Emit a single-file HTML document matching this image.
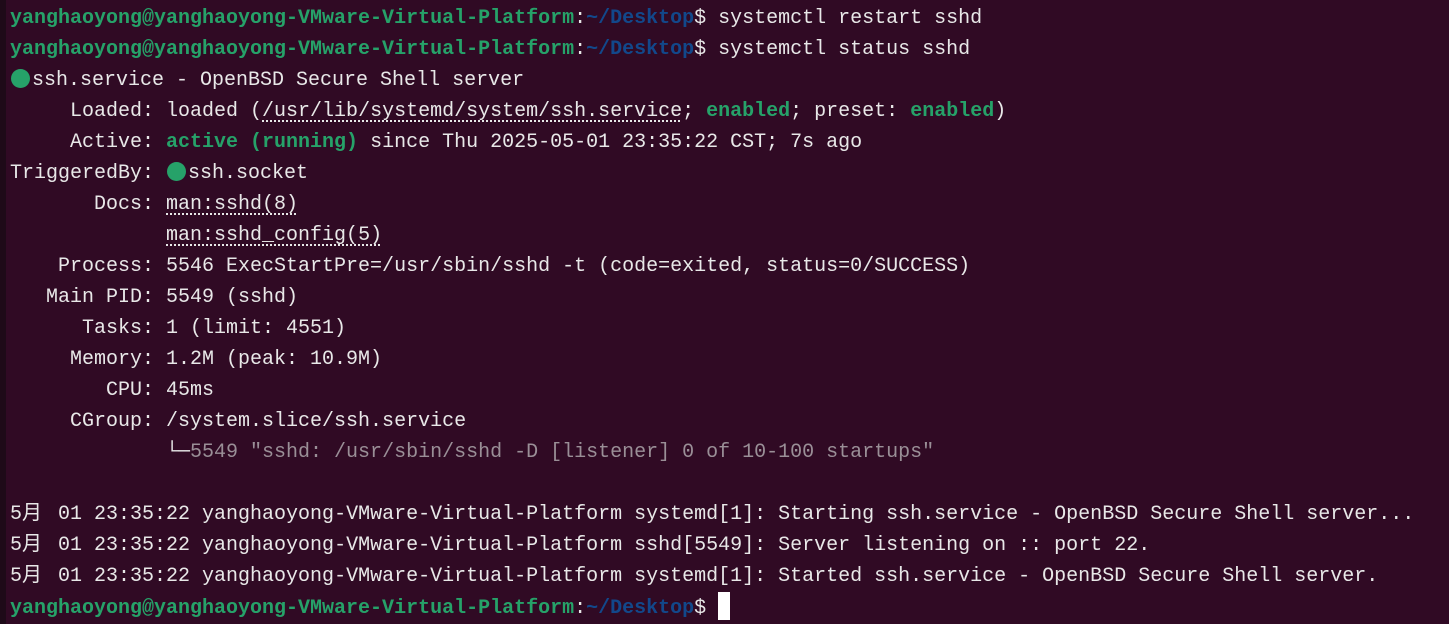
<!DOCTYPE html>
<html><head><meta charset="utf-8"><style>
html,body{margin:0;padding:0;width:1449px;height:624px;overflow:hidden;background:#300a24;}
.edge{position:absolute;left:0;top:0;width:6px;height:624px;background:#1e0a18;}
pre{position:absolute;left:10px;top:3px;margin:0;font-family:"Liberation Mono","Noto Sans CJK SC",monospace;font-size:20px;line-height:31px;color:#e8e8e8;white-space:pre;}
.g{color:#26a269;font-weight:bold}
.gn{color:#26a269;font-weight:bold}
.b{color:#12488b;font-weight:bold}
.u{text-decoration:underline dotted;text-underline-offset:4px}
.dim{color:#9a8f97}
.dot{display:inline-block;width:19px;height:19px;border-radius:50%;background:#26a269;vertical-align:-3px;margin:0 2px 0 1px;}
.cj{display:inline-block;width:24px}
.cur{display:inline-block;width:12px;height:28px;background:#fff;vertical-align:-7px}
</style></head><body><div class="edge"></div><pre><span class="g">yanghaoyong@yanghaoyong-VMware-Virtual-Platform</span>:<span class="b">~/Desktop</span>$ systemctl restart sshd
<span class="g">yanghaoyong@yanghaoyong-VMware-Virtual-Platform</span>:<span class="b">~/Desktop</span>$ systemctl status sshd
<span class="dot"></span>ssh.service - OpenBSD Secure Shell server
     Loaded: loaded (<span class="u">/usr/lib/systemd/system/ssh.service</span>; <span class="gn">enabled</span>; preset: <span class="gn">enabled</span>)
     Active: <span class="gn">active (running)</span> since Thu 2025-05-01 23:35:22 CST; 7s ago
TriggeredBy: <span class="dot"></span>ssh.socket
       Docs: <span class="u">man:sshd(8)</span>
             <span class="u">man:sshd_config(5)</span>
    Process: 5546 ExecStartPre=/usr/sbin/sshd -t (code=exited, status=0/SUCCESS)
   Main PID: 5549 (sshd)
      Tasks: 1 (limit: 4551)
     Memory: 1.2M (peak: 10.9M)
        CPU: 45ms
     CGroup: /system.slice/ssh.service
             └─<span class="dim">5549 "sshd: /usr/sbin/sshd -D [listener] 0 of 10-100 startups"</span>

5<span class="cj">月</span> 01 23:35:22 yanghaoyong-VMware-Virtual-Platform systemd[1]: Starting ssh.service - OpenBSD Secure Shell server...
5<span class="cj">月</span> 01 23:35:22 yanghaoyong-VMware-Virtual-Platform sshd[5549]: Server listening on :: port 22.
5<span class="cj">月</span> 01 23:35:22 yanghaoyong-VMware-Virtual-Platform systemd[1]: Started ssh.service - OpenBSD Secure Shell server.
<span class="g">yanghaoyong@yanghaoyong-VMware-Virtual-Platform</span>:<span class="b">~/Desktop</span>$ <span class="cur"></span></pre></body></html>
